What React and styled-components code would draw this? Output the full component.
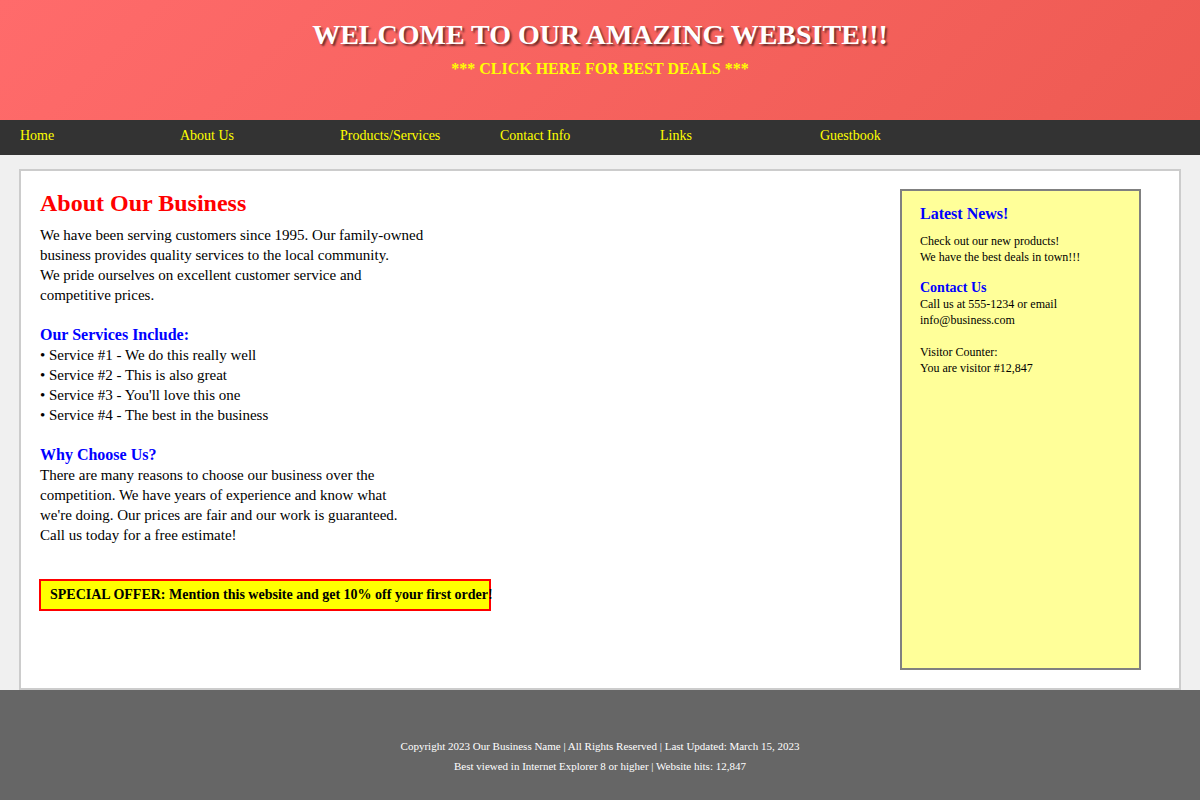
import React from "react";
import styled, { createGlobalStyle } from "styled-components";

const GlobalStyle = createGlobalStyle`
  html, body {
    margin: 0;
    padding: 0;
    background: #f0f0f0;
    font-family: "Liberation Serif", "Times New Roman", serif;
  }
`;

const Header = styled.header`
  height: 120px;
  box-sizing: border-box;
  padding-top: 18px;
  text-align: center;
  background: linear-gradient(135deg, #ff6b6b, #ee5a52);
`;

const Title = styled.h1`
  margin: 0;
  font-size: 28px;
  line-height: 34px;
  font-weight: bold;
  color: #fff;
  text-shadow: 2px 2px 2px rgba(0, 0, 0, 0.55);
`;

const Deals = styled.p`
  margin: 7px 0 0;
  font-size: 16px;
  line-height: 20px;
  font-weight: bold;
  color: #ffff00;
`;

const Nav = styled.nav`
  height: 35px;
  box-sizing: border-box;
  background: #333;
  display: flex;
  align-items: flex-start;
  padding: 7px 0 0 20px;
`;

const NavLink = styled.a`
  width: 160px;
  font-size: 14px;
  line-height: 18px;
  color: #ffff00;
  text-decoration: none;
`;

const Container = styled.div`
  margin: 14px 19px 0;
  border: 2px solid #ccc;
  background: #fff;
  padding: 18px 19px;
  height: 481px;
  display: flex;
`;

const Content = styled.main`
  flex: 1;
  color: #000;
`;

const Heading = styled.h2`
  margin: 0 0 8px;
  font-size: 24px;
  line-height: 28px;
  color: #ff0000;
`;

const SubHeading = styled.h3`
  margin: 20px 0 0;
  font-size: 16px;
  line-height: 20px;
  color: #0000ff;
`;

const Text = styled.p`
  margin: 0;
  font-size: 15px;
  line-height: 20px;
`;

const Offer = styled.div`
  margin-top: 34px;
  margin-left: -1px;
  width: 452px;
  box-sizing: border-box;
  border: 2px solid #ff0000;
  background: #ffff00;
  padding: 0 9px;
  font-size: 14px;
  line-height: 28px;
  font-weight: bold;
  white-space: nowrap;
`;

const Sidebar = styled.aside`
  width: 241px;
  margin-right: 19px;
  box-sizing: border-box;
  border: 2px solid #808080;
  background: #ffff99;
  padding: 13px 18px;
  font-size: 12px;
  line-height: 16px;
`;

const SideTitle = styled.h3`
  margin: 0 0 9px;
  font-size: 16px;
  line-height: 20px;
  color: #0000ff;
`;

const SideSub = styled.h4`
  margin: 15px 0 0;
  font-size: 14px;
  line-height: 16px;
  color: #0000ff;
`;

const SideText = styled.p`
  margin: 0;
`;

const Footer = styled.footer`
  height: 110px;
  box-sizing: border-box;
  padding-top: 46px;
  background: #666;
  color: #fff;
  text-align: center;
  font-size: 11px;
  line-height: 20px;
`;

const navItems = ["Home", "About Us", "Products/Services", "Contact Info", "Links", "Guestbook"];

export default function App() {
  return (
    <>
      <GlobalStyle />
      <Header>
        <Title>WELCOME TO OUR AMAZING WEBSITE!!!</Title>
        <Deals>*** CLICK HERE FOR BEST DEALS ***</Deals>
      </Header>
      <Nav>
        {navItems.map((item) => (
          <NavLink key={item} href="#">
            {item}
          </NavLink>
        ))}
      </Nav>
      <Container>
        <Content>
          <Heading>About Our Business</Heading>
          <Text>
            We have been serving customers since 1995. Our family-owned
            <br />
            business provides quality services to the local community.
            <br />
            We pride ourselves on excellent customer service and
            <br />
            competitive prices.
          </Text>
          <SubHeading>Our Services Include:</SubHeading>
          <Text>
            • Service #1 - We do this really well
            <br />
            • Service #2 - This is also great
            <br />
            • Service #3 - You'll love this one
            <br />
            • Service #4 - The best in the business
          </Text>
          <SubHeading>Why Choose Us?</SubHeading>
          <Text>
            There are many reasons to choose our business over the
            <br />
            competition. We have years of experience and know what
            <br />
            we're doing. Our prices are fair and our work is guaranteed.
            <br />
            Call us today for a free estimate!
          </Text>
          <Offer>SPECIAL OFFER: Mention this website and get 10% off your first order!</Offer>
        </Content>
        <Sidebar>
          <SideTitle>Latest News!</SideTitle>
          <SideText>
            Check out our new products!
            <br />
            We have the best deals in town!!!
          </SideText>
          <SideSub>Contact Us</SideSub>
          <SideText>
            Call us at 555-1234 or email
            <br />
            info@business.com
            <br />
            <br />
            Visitor Counter:
            <br />
            You are visitor #12,847
          </SideText>
        </Sidebar>
      </Container>
      <Footer>
        <div>Copyright 2023 Our Business Name | All Rights Reserved | Last Updated: March 15, 2023</div>
        <div>Best viewed in Internet Explorer 8 or higher | Website hits: 12,847</div>
      </Footer>
    </>
  );
}
